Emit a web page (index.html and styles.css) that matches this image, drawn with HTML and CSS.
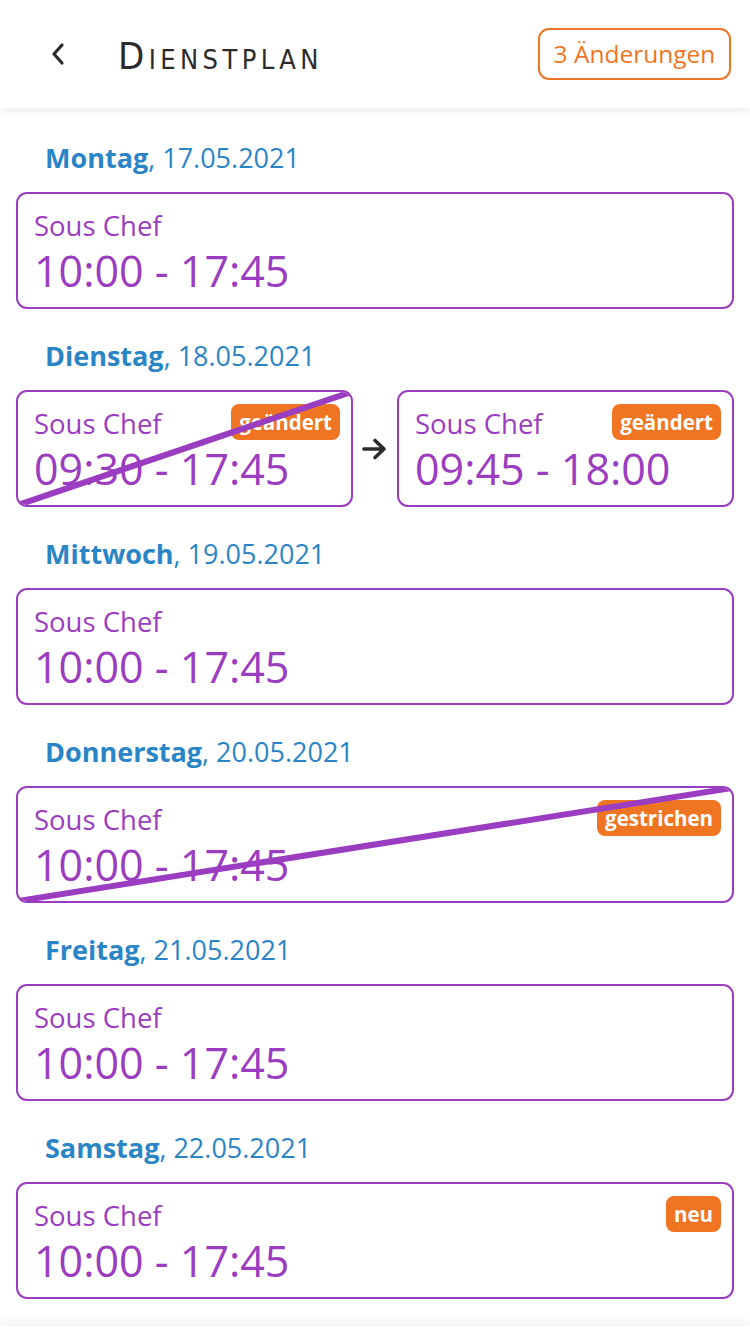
FILE: index.html
```html
<!DOCTYPE html>
<html lang="de">
<head>
<meta charset="utf-8">
<title>Dienstplan</title>
<link rel="stylesheet" href="styles.css">
</head>
<body>
<header class="topbar">
  <div class="topbar-left">
    <svg class="back" width="20" height="26" viewBox="0 0 20 26"><path d="M14 4 L6 13 L14 22" fill="none" stroke="#2b2b2b" stroke-width="3.2" stroke-linecap="round" stroke-linejoin="round"/></svg>
    <h1 class="title">Dienstplan</h1>
  </div>
  <button class="changes">3 Änderungen</button>
</header>

<main class="list">
  <section class="day">
    <div class="date"><b>Montag</b>, 17.05.2021</div>
    <div class="card">
      <div class="role">Sous Chef</div>
      <div class="time">10:00 - 17:45</div>
    </div>
  </section>

  <section class="day">
    <div class="date"><b>Dienstag</b>, 18.05.2021</div>
    <div class="pair">
      <div class="card struck">
        <div class="role">Sous Chef</div>
        <div class="time">09:30 - 17:45</div>
        <span class="badge">geändert</span>
        <svg class="strike" viewBox="0 0 100 100" preserveAspectRatio="none"><line x1="0" y1="100" x2="100" y2="0" vector-effect="non-scaling-stroke"/></svg>
      </div>
      <svg class="arrow" width="28" height="24" viewBox="0 0 28 24"><path d="M3 12 H23 M14 3.5 L23 12 L14 20.5" fill="none" stroke="#2b2b2b" stroke-width="3.6" stroke-linecap="round" stroke-linejoin="round"/></svg>
      <div class="card">
        <div class="role">Sous Chef</div>
        <div class="time">09:45 - 18:00</div>
        <span class="badge">geändert</span>
      </div>
    </div>
  </section>

  <section class="day">
    <div class="date"><b>Mittwoch</b>, 19.05.2021</div>
    <div class="card">
      <div class="role">Sous Chef</div>
      <div class="time">10:00 - 17:45</div>
    </div>
  </section>

  <section class="day">
    <div class="date"><b>Donnerstag</b>, 20.05.2021</div>
    <div class="card struck">
      <div class="role">Sous Chef</div>
      <div class="time">10:00 - 17:45</div>
      <span class="badge">gestrichen</span>
      <svg class="strike" viewBox="0 0 100 100" preserveAspectRatio="none"><line x1="0" y1="100" x2="100" y2="0" vector-effect="non-scaling-stroke"/></svg>
    </div>
  </section>

  <section class="day">
    <div class="date"><b>Freitag</b>, 21.05.2021</div>
    <div class="card">
      <div class="role">Sous Chef</div>
      <div class="time">10:00 - 17:45</div>
    </div>
  </section>

  <section class="day">
    <div class="date"><b>Samstag</b>, 22.05.2021</div>
    <div class="card">
      <div class="role">Sous Chef</div>
      <div class="time">10:00 - 17:45</div>
      <span class="badge">neu</span>
    </div>
  </section>
</main>
<div class="bottom-fade"></div>
</body>
</html>
```

FILE: styles.css
```css
* { box-sizing: border-box; }
html, body { margin: 0; padding: 0; background: #fff; }
body {
  font-family: "Open Sans", "Noto Sans", sans-serif;
  width: 750px;
  height: 1334px;
  overflow: hidden;
}

.topbar {
  height: 108px;
  display: flex;
  align-items: center;
  justify-content: space-between;
  padding: 0 19px 0 48px;
  background: #fff;
  box-shadow: 0 3px 8px rgba(0,0,0,0.08);
  position: relative;
  z-index: 2;
}
.topbar-left { display: flex; align-items: center; }
.back { display: block; margin-right: 50px; }
.title {
  margin: 0;
  font-family: "DejaVu Sans Condensed", "Liberation Sans Narrow", sans-serif;
  font-weight: normal;
  font-variant: small-caps;
  font-size: 38px;
  letter-spacing: 4.4px;
  color: #2b2b2b;
  line-height: 1;
  padding-top: 4px;
}
.changes {
  font-family: "Open Sans", sans-serif;
  font-size: 24.5px;
  color: #ee7524;
  background: #fff;
  border: 2px solid #ee7524;
  border-radius: 11px;
  height: 52px;
  width: 193px;
  padding: 0;
  line-height: 1;
}

.list { padding: 32px 16px 0; }
.day { margin-bottom: 29px; }
.date {
  font-size: 27px;
  line-height: 36px;
  color: #2a85c6;
  padding-left: 29px;
  margin-bottom: 16px;
}
.date b { font-weight: 700; }

.card {
  position: relative;
  border: 2px solid #9b3dc0;
  border-radius: 11px;
  padding: 15px 16px 0;
  height: 117px;
  color: #9b3dc0;
  overflow: hidden;
  background: #fff;
}
.role { font-size: 27.5px; line-height: 34px; }
.time { font-size: 43px; line-height: 56px; font-weight: 500; }

.badge {
  position: absolute;
  top: 12px;
  right: 11px;
  height: 36px;
  line-height: 36px;
  padding: 0 8px;
  border-radius: 8px;
  background: #f07522;
  color: #fff;
  font-weight: 700;
  font-size: 20.5px;
}
.strike {
  position: absolute;
  inset: 0;
  width: 100%;
  height: 100%;
  pointer-events: none;
}
.strike line { stroke: #9b3dc0; stroke-width: 6; }

.pair {
  display: grid;
  grid-template-columns: 1fr 44px 1fr;
  align-items: center;
}
.arrow { justify-self: center; }

.bottom-fade {
  position: fixed;
  left: 0; right: 0; bottom: 0;
  height: 8px;
  background: #fff;
  box-shadow: 0 -4px 8px rgba(0,0,0,0.06);
  z-index: 3;
}
```
